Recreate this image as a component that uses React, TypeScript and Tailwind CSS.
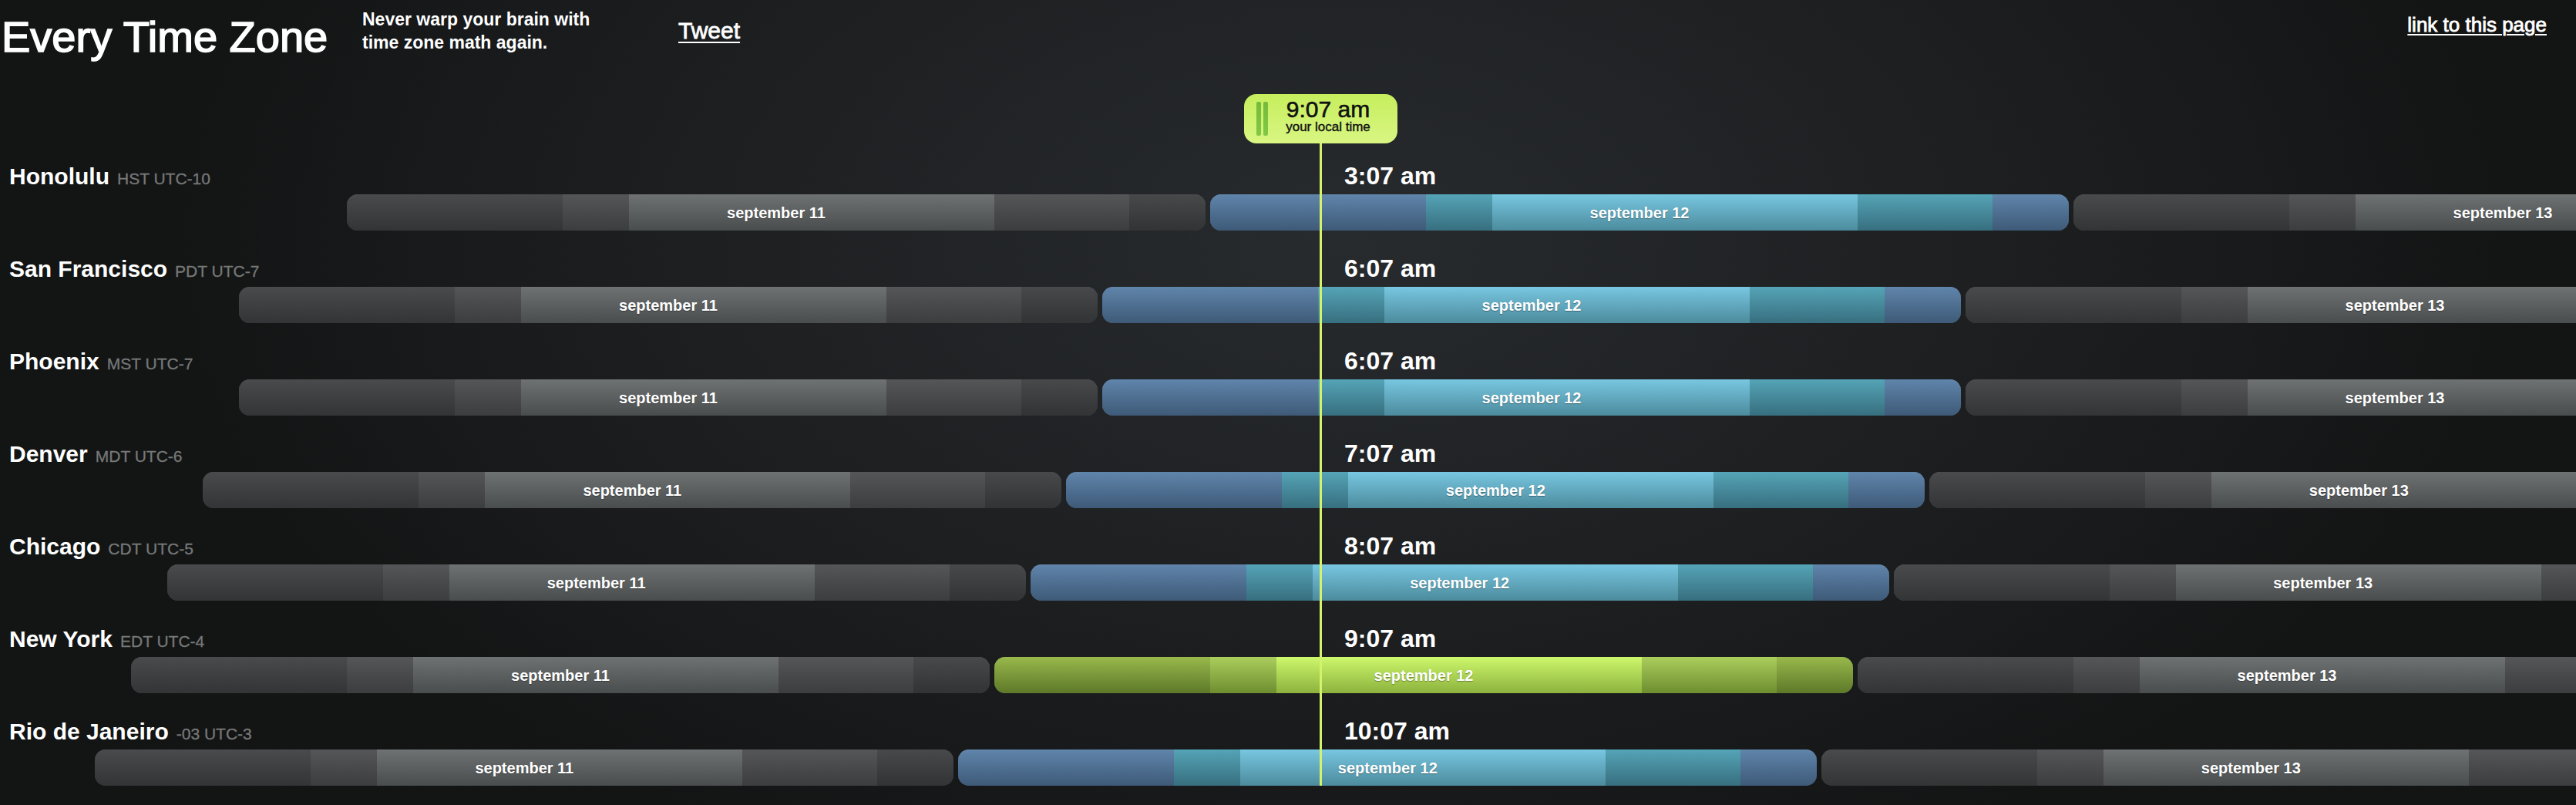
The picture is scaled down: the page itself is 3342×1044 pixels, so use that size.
import React from 'react';

const HOUR = 1120 / 24;
const FIRST_DAY_X = 450; // left edge of "september 11" for UTC-10
const NOW_X = 1713;

type Tone = 'gray' | 'blue' | 'green';

const SEGMENT_WIDTHS = ['w-[280px]', 'w-[86px]', 'w-[474px]', 'w-[175px]', 'flex-1'];

const TONES: Record<Tone, string[]> = {
  gray: [
    'from-[#494b4d] to-[#323435]',
    'from-[#545658] to-[#3b3d3f]',
    'from-[#6f7272] to-[#4a4d4e]',
    'from-[#545658] to-[#3b3d3f]',
    'from-[#47494b] to-[#313334]',
  ],
  blue: [
    'from-[#6085ab] to-[#3e5a78]',
    'from-[#55a4b7] to-[#376f7f]',
    'from-[#78c7e1] to-[#4c8b9d]',
    'from-[#55a4b7] to-[#376f7f]',
    'from-[#6085ab] to-[#3e5a78]',
  ],
  green: [
    'from-[#99b94c] to-[#5d7929]',
    'from-[#abce5d] to-[#6e8e2f]',
    'from-[#cef86c] to-[#8cb23d]',
    'from-[#abce5d] to-[#6e8e2f]',
    'from-[#99b94c] to-[#5d7929]',
  ],
};

const zones = [
  { city: 'Honolulu', abbr: 'HST UTC-10', offset: -10, time: '3:07 am' },
  { city: 'San Francisco', abbr: 'PDT UTC-7', offset: -7, time: '6:07 am' },
  { city: 'Phoenix', abbr: 'MST UTC-7', offset: -7, time: '6:07 am' },
  { city: 'Denver', abbr: 'MDT UTC-6', offset: -6, time: '7:07 am' },
  { city: 'Chicago', abbr: 'CDT UTC-5', offset: -5, time: '8:07 am' },
  { city: 'New York', abbr: 'EDT UTC-4', offset: -4, time: '9:07 am', local: true },
  { city: 'Rio de Janeiro', abbr: '-03 UTC-3', offset: -3, time: '10:07 am' },
];

const DayBar = ({ label, tone }: { label: string; tone: Tone }) => {
  const edge =
    tone === 'gray'
      ? 'shadow-[inset_0_1px_0_rgba(255,255,255,0.22),inset_0_-1px_0_rgba(255,255,255,0.2)]'
      : 'shadow-[inset_0_1px_0_rgba(255,255,255,0.25),inset_0_-1px_0_rgba(255,255,255,0.3)]';
  return (
    <div className={`grid w-[1114px] h-[47px] flex-none rounded-[14px] overflow-hidden ${edge}`}>
      <div className="[grid-area:1/1] flex">
        {TONES[tone].map((c, i) => (
          <div key={i} className={`${SEGMENT_WIDTHS[i]} h-full bg-gradient-to-b ${c}`} />
        ))}
      </div>
      <div className="[grid-area:1/1] z-10 flex items-center justify-center text-[20px] font-bold text-white [text-shadow:0_1px_1px_rgba(0,0,0,0.35)]">
        {label}
      </div>
    </div>
  );
};

const ZoneRow = ({ zone }: { zone: (typeof zones)[number] }) => {
  const startX = FIRST_DAY_X - (zone.offset + 10) * HOUR;
  return (
    <div className="mb-[32px]">
      <div className="flex items-baseline h-[34px] leading-[34px] mb-[7px]">
        <div className="w-[1744px] shrink-0 flex items-baseline pl-[12px]">
          <span className="text-[30px] font-bold text-white">{zone.city}</span>
          <span className="ml-[10px] text-[21px] text-[#777878] [-webkit-text-stroke:0.3px_#777878]">{zone.abbr}</span>
        </div>
        <span className="text-[32px] font-bold text-white">{zone.time}</span>
      </div>
      <div className="flex gap-[6px]" style={{ marginLeft: startX }}>
        <DayBar label="september 11" tone="gray" />
        <DayBar label="september 12" tone={zone.local ? 'green' : 'blue'} />
        <DayBar label="september 13" tone="gray" />
      </div>
    </div>
  );
};

export default function App() {
  return (
    <div className="relative h-screen w-full overflow-hidden bg-[radial-gradient(ellipse_45%_85%_at_52%_30%,#282b2e_0%,#1d1f21_55%,#131515_100%)] font-['Liberation_Sans',Arial,sans-serif] text-white">
      {/* header */}
      <header className="flex items-start h-[120px]">
        <h1 className="w-[470px] shrink-0 pl-[2px] mt-[20px] text-[56px] leading-none font-normal [-webkit-text-stroke:1.6px_white]">
          Every Time Zone
        </h1>
        <p className="w-[410px] shrink-0 mt-[10px] text-[23px] leading-[30px] font-bold">
          Never warp your brain with
          <br />
          time zone math again.
        </p>
        <a className="mt-[25px] text-[30px] leading-none underline underline-offset-[4px] decoration-2 [-webkit-text-stroke:0.8px_white]">
          Tweet
        </a>
        <a className="ml-auto mr-[38px] mt-[19px] text-[26px] leading-none underline underline-offset-[3px] decoration-2 [-webkit-text-stroke:0.8px_white]">
          link to this page
        </a>
      </header>

      {/* timeline */}
      <section className="relative pt-[91px]">
        {zones.map((z) => (
          <ZoneRow key={z.city} zone={z} />
        ))}

        {/* current time marker */}
        <div
          className="absolute top-[2px] z-20 flex h-[64px] w-[199px] items-start rounded-[16px] bg-gradient-to-b from-[#c6ee5c] to-[#d9f682] pl-4 pr-3 text-[#111]"
          style={{ left: NOW_X - 99 }}
        >
          <div className="flex gap-[3px] self-center">
            <div className="h-[44px] w-[6px] rounded-[2px] bg-gradient-to-b from-[#74bb3c] to-[#82c846]" />
            <div className="h-[44px] w-[6px] rounded-[2px] bg-gradient-to-b from-[#74bb3c] to-[#82c846]" />
          </div>
          <div className="flex flex-1 flex-col items-center pt-[5px]">
            <span className="text-[30px] leading-none [-webkit-text-stroke:0.6px_#111]">9:07 am</span>
            <span className="-mt-px text-[17px] leading-none [-webkit-text-stroke:0.4px_#111]">your local time</span>
          </div>
        </div>
        <div
          className="absolute top-[66px] bottom-0 z-20 w-[3px] bg-[#d4f26a]"
          style={{ left: NOW_X - 1 }}
        />
      </section>
    </div>
  );
}
